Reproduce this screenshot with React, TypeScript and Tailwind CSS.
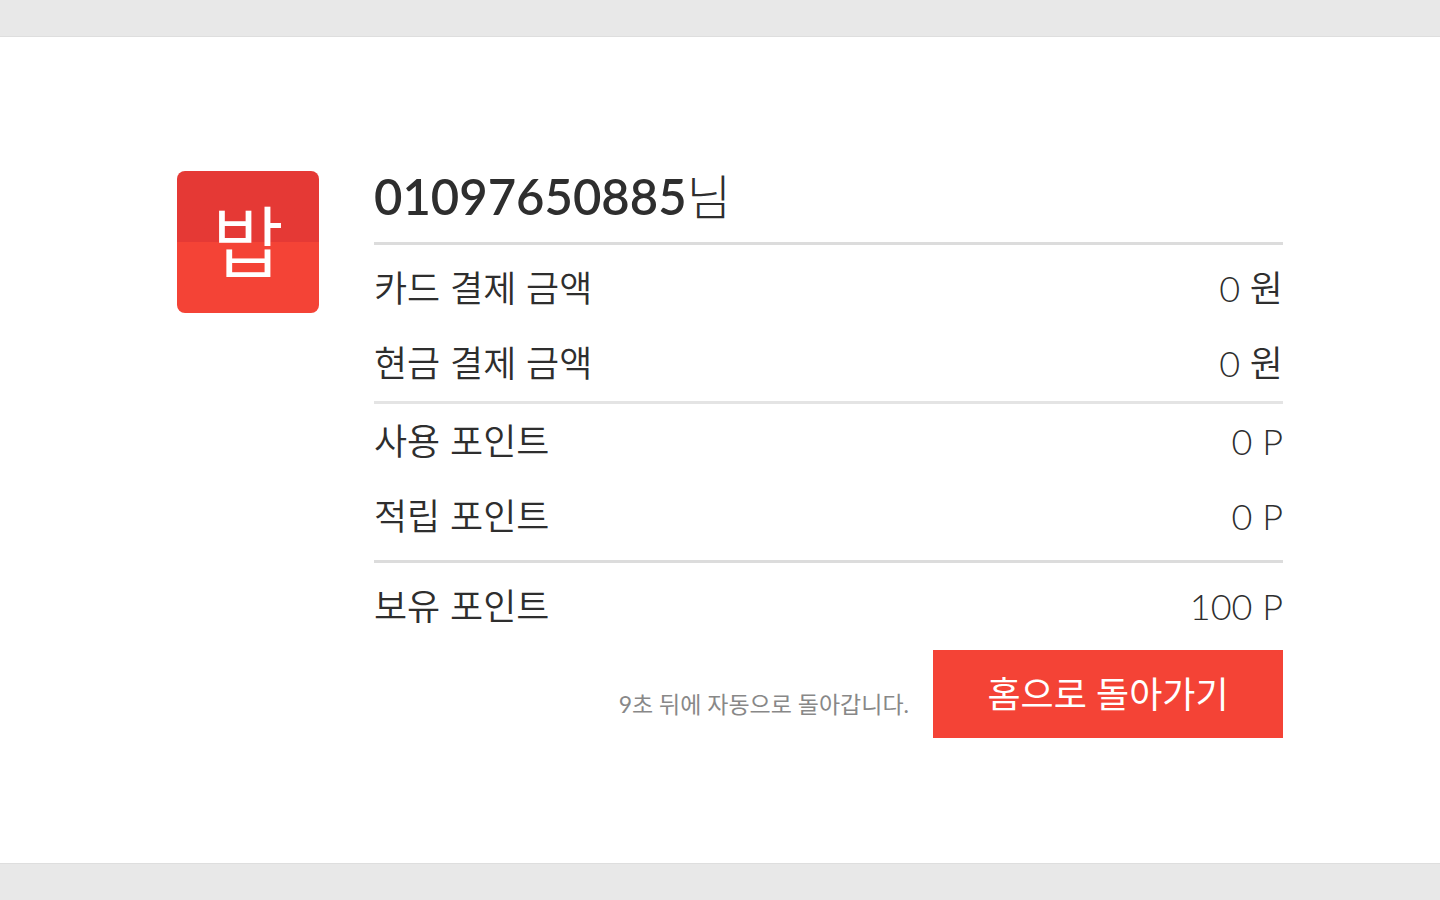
const payments = [
  { label: '카드 결제 금액', value: '0 원' },
  { label: '현금 결제 금액', value: '0 원' },
];

const points = [
  { label: '사용 포인트', value: '0 P' },
  { label: '적립 포인트', value: '0 P' },
];

const balance = [{ label: '보유 포인트', value: '100 P' }];

function Rows({ items }: { items: { label: string; value: string }[] }) {
  return (
    <dl>
      {items.map((item) => (
        <div key={item.label} className="flex h-[75px] items-center justify-between pb-0.5 text-[36px] leading-[48px] font-[350]">
          <dt>{item.label}</dt>
          <dd>{item.value}</dd>
        </div>
      ))}
    </dl>
  );
}

export default function App() {
  return (
    <div className="flex min-h-screen flex-col bg-[#e8e8e8] py-9 font-['Lato','Noto_Sans_CJK_KR',sans-serif] text-[#2e2e2e]">
      <main className="flex grow items-start gap-[55px] border-y border-[#dedede] bg-white pt-[134px] pr-[157px] pb-[124px] pl-[177px]">
        {/* Logo */}
        <div className="flex size-[142px] shrink-0 items-center justify-center rounded-lg bg-linear-to-b from-[#e53935] from-50% to-[#f44336] to-50%">
          <span className="text-[78px] leading-[80px] font-[350] text-white">밥</span>
        </div>

        <div className="min-w-0 grow">
          <h1 className="h-[71px] text-[49px] leading-[50px] font-light">
            <strong className="font-semibold">01097650885</strong>
            <span className="text-[48px]">님</span>
          </h1>

          <div className="border-t-[3px] border-[#dcdcdc] pt-[6px]">
            <Rows items={payments} />
          </div>
          <div className="border-t-[3px] border-[#e4e4e4] pb-[6px]">
            <Rows items={points} />
          </div>
          <div className="border-t-[3px] border-[#dcdcdc] pt-[6px]">
            <Rows items={balance} />
          </div>

          <div className="mt-[6px] flex items-center justify-end gap-6">
            <p className="pt-5 text-[23px] leading-8 text-[#888888]">9초 뒤에 자동으로 돌아갑니다.</p>
            <button type="button" className="h-[88px] w-[350px] bg-[#f44336] text-[36px] leading-[48px] text-white">
              홈으로 돌아가기
            </button>
          </div>
        </div>
      </main>
    </div>
  );
}
